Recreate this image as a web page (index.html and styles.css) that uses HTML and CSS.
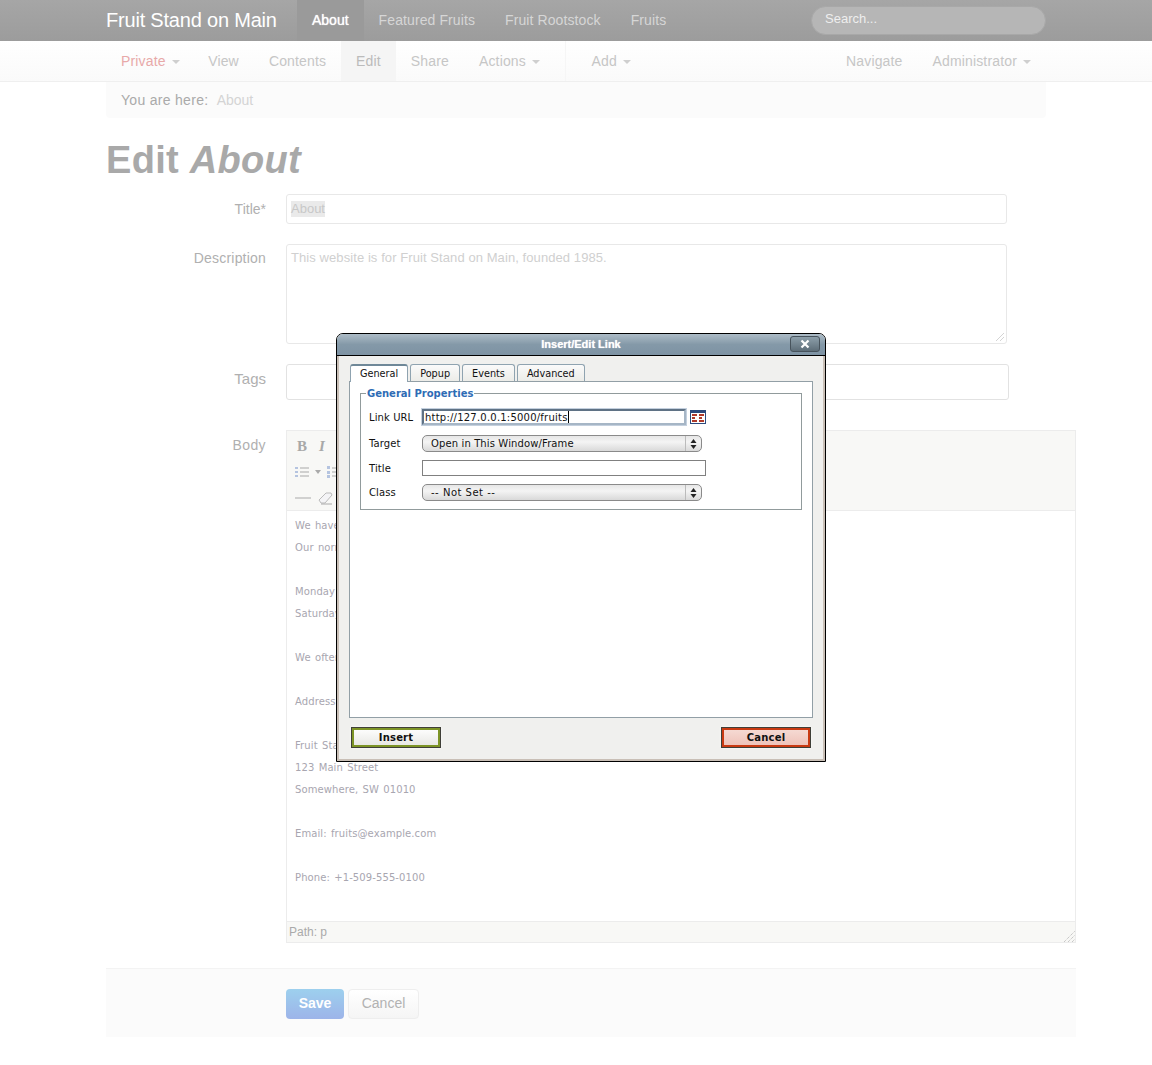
FILE: index.html
```html
<!DOCTYPE html>
<html>

<head>
  <meta charset="utf-8" />
  <title>Edit About</title>
  <link rel="stylesheet" href="styles.css">
</head>

<body>
  <div class="navbar">
    <div class="container nav_row">
      <a class="brand">Fruit Stand on Main</a>
      <a class="nav_item nav_active">About</a>
      <a class="nav_item">Featured Fruits</a>
      <a class="nav_item">Fruit Rootstock</a>
      <a class="nav_item">Fruits</a>
      <div class="search">Search...</div>
    </div>
  </div>

  <div class="subnav">
    <div class="container nav_row">
      <a class="sub_item sub_private">Private <i class="caret"></i></a>
      <a class="sub_item">View</a>
      <a class="sub_item">Contents</a>
      <a class="sub_item sub_active">Edit</a>
      <a class="sub_item">Share</a>
      <a class="sub_item">Actions <i class="caret"></i></a>
      <span class="sub_divider"></span>
      <a class="sub_item">Add <i class="caret"></i></a>
      <a class="sub_item sub_push">Navigate</a>
      <a class="sub_item sub_admin">Administrator <i class="caret"></i></a>
    </div>
  </div>

  <div class="container">
    <div class="breadcrumb">You are here: <a>About</a></div>
    <h1>Edit <em>About</em></h1>
  </div>

  <form class="edit_form">
    <div class="form_row">
      <label class="row_label label_mid">Title*</label>
      <div class="field field_title"><span class="selected">About</span></div>
    </div>
    <div class="form_row">
      <label class="row_label label_desc">Description</label>
      <div class="field field_desc">This website is for Fruit Stand on Main, founded 1985.
        <svg class="grip" width="10" height="10" viewBox="0 0 10 10">
          <path d="M1 9 9 1M5 9 9 5" stroke="#d4d4d4" fill="none" />
        </svg>
      </div>
    </div>
    <div class="form_row row_tags">
      <label class="row_label label_tags">Tags</label>
      <div class="field field_tags"></div>
    </div>
    <div class="form_row">
      <label class="row_label label_body">Body</label>
      <div class="editor">
        <div class="toolbar">
          <div class="tool_row">
            <span class="tool_b">B</span>
            <span class="tool_i">I</span>
          </div>
          <div class="tool_row">
            <svg width="14" height="14" viewBox="0 0 14 14">
              <path d="M0 2h3v2H0zM0 6h3v2H0zM0 10h3v2H0z" fill="#b5c4e0" />
              <path d="M5 3h9M5 7h9M5 11h9" stroke="#a8a8a8" fill="none" />
            </svg>
            <i class="caret caret_tool"></i>
            <svg class="tool_num" width="12" height="14" viewBox="0 0 12 14">
              <path d="M0 1h3v3H0zM0 6h3v3H0zM0 10h3v3H0z" fill="#b5c4e0" />
              <path d="M5 3h7M5 7h7M5 11h7" stroke="#a8a8a8" fill="none" />
            </svg>
          </div>
          <div class="tool_row">
            <svg width="16" height="4" viewBox="0 0 16 4">
              <path d="M0 2h16" stroke="#aaa" fill="none" />
            </svg>
            <svg class="tool_erase" width="15" height="13" viewBox="0 0 15 13">
              <path d="M1 8 8 1h5l1 2-7 8H3z" fill="#f4f4f6" stroke="#bbb" />
              <path d="M3 12h11" stroke="#aaa" fill="none" />
            </svg>
          </div>
        </div>
        <div class="editor_text">
          <p>We have fresh fruit</p>
          <p>Our normal hours are</p>
          <p>&nbsp;</p>
          <p>Monday to Friday</p>
          <p>Saturday and Sunday</p>
          <p>&nbsp;</p>
          <p>We often have more</p>
          <p>&nbsp;</p>
          <p>Address:</p>
          <p>&nbsp;</p>
          <p>Fruit Stand on Main</p>
          <p>123 Main Street</p>
          <p>Somewhere, SW 01010</p>
          <p>&nbsp;</p>
          <p>Email: fruits@example.com</p>
          <p>&nbsp;</p>
          <p>Phone: +1-509-555-0100</p>
        </div>
        <div class="statusbar">Path: p
          <svg class="grip_editor" width="11" height="11" viewBox="0 0 11 11">
            <path d="M0 11 11 0M4 11l7-7M8 11l3-3" stroke="#b4b4b4" stroke-dasharray="1 1" fill="none" />
          </svg>
        </div>
      </div>
    </div>
    <div class="form_actions">
      <span class="btn btn_save">Save</span>
      <span class="btn btn_cancel">Cancel</span>
    </div>
  </form>

  <div class="dialog">
    <div class="dialog_title">
      <span class="dialog_name">Insert/Edit Link</span>
      <span class="dialog_close">
        <svg width="10" height="10" viewBox="0 0 10 10">
          <path d="M1.500 1.500 8.500 8.500M8.500 1.500 1.500 8.500" stroke="#fff" stroke-width="2.200" fill="none" />
        </svg>
      </span>
    </div>
    <div class="dialog_body">
      <div class="tabs">
        <span class="tab tab_active">General</span>
        <span class="tab">Popup</span>
        <span class="tab">Events</span>
        <span class="tab">Advanced</span>
      </div>
      <div class="panel">
        <fieldset class="props">
          <legend>General Properties</legend>
          <div class="prop_row row_url">
            <label>Link URL</label>
            <div class="url_field">http://127.0.0.1:5000/fruits<span class="text_cursor"></span></div>
            <svg class="browse" width="16" height="14" viewBox="0 0 16 14">
              <rect x="0.500" y="0.500" width="15" height="13" fill="#fff" stroke="#2b4a7d" />
              <path d="M1 1h14v2H1z" fill="#2b4a7d" />
              <path d="M2 4h5v2H2zM9 4h5v2H9zM2 7h3v2H2zM9 7h3v2H9zM2 10h5v2H2zM9 10h5v2H9z" fill="#b03a2a" />
            </svg>
          </div>
          <div class="prop_row row_target">
            <label>Target</label>
            <div class="select_box">Open in This Window/Frame
              <span class="select_arrow">
                <svg width="7" height="10" viewBox="0 0 7 10">
                  <path d="M3.500 0 6.500 4H.5zM3.500 10 .5 6h6z" fill="#222" />
                </svg>
              </span>
            </div>
          </div>
          <div class="prop_row row_title">
            <label>Title</label>
            <div class="text_box"></div>
          </div>
          <div class="prop_row row_class">
            <label>Class</label>
            <div class="select_box select_notset">-- Not Set --
              <span class="select_arrow">
                <svg width="7" height="10" viewBox="0 0 7 10">
                  <path d="M3.500 0 6.500 4H.5zM3.500 10 .5 6h6z" fill="#222" />
                </svg>
              </span>
            </div>
          </div>
        </fieldset>
      </div>
      <div class="dialog_buttons">
        <span class="dlg_btn dlg_insert">Insert</span>
        <span class="dlg_btn dlg_cancel">Cancel</span>
      </div>
    </div>
  </div>
</body>

</html>
```

FILE: styles.css
```css
* {
  box-sizing: border-box;
}

body {
  margin: 0;
  background: #fff;
  font-family: "Liberation Sans", Arial, sans-serif;
  font-size: 14px;
  color: #aaa;
}

.container {
  width: 940px;
  margin-left: 106px;
}

.nav_row {
  display: flex;
  align-items: stretch;
  height: 100%;
}

.navbar {
  height: 41px;
  background: linear-gradient(#a6a6a6, #9c9c9c);
}

.brand {
  width: 191px;
  font-size: 20px;
  line-height: 40px;
  color: #fff;
  letter-spacing: -0.2px;
  white-space: nowrap;
}

.nav_item {
  padding: 0 15px;
  line-height: 40px;
  color: #d6d6d6;
  letter-spacing: 0.1px;
}

.nav_active {
  background: #9a9a9a;
  color: #fff;
  text-shadow: 0 0 1px #fff;
  letter-spacing: 0;
}

.search {
  width: 235px;
  height: 29px;
  margin: 6px 0 0 auto;
  padding-left: 13px;
  border-radius: 15px;
  border: 1px solid #a8a8a8;
  background: #b6b6b6;
  font-size: 13px;
  line-height: 23px;
  color: #eee;
}

.subnav {
  height: 41px;
  background: linear-gradient(#fff, #fafafa);
  border-bottom: 1px solid #efefef;
}

.sub_item {
  padding: 0 15px;
  line-height: 40px;
  color: #c6c6c6;
  white-space: nowrap;
  letter-spacing: 0.15px;
}

.sub_private {
  color: #e8a9a9;
}

.sub_active {
  background: #f5f5f5;
  color: #bbb;
}

.sub_divider {
  width: 1px;
  margin: 0 10px 0 12px;
  background: #f6f6f6;
}

.sub_push {
  margin-left: auto;
}

.sub_admin {
  margin-right: 1.5px;
}

.caret {
  display: inline-block;
  width: 0;
  height: 0;
  margin-left: 2px;
  margin-right: -1.5px;
  vertical-align: 2px;
  border-left: 4px solid transparent;
  border-right: 4px solid transparent;
  border-top: 4px solid #cfcfcf;
}

.breadcrumb {
  height: 36px;
  padding-left: 15px;
  background: #fbfbfb;
  border-radius: 0 0 4px 4px;
  line-height: 37px;
  color: #aaa;
  letter-spacing: 0.3px;
}

.breadcrumb a {
  margin-left: 4px;
  color: #d4d4d4;
  letter-spacing: 0;
}

h1 {
  margin: 22px 0 14px;
  font-size: 38px;
  line-height: 40px;
  color: #a9a9a9;
  letter-spacing: 0.3px;
}

.edit_form {
  width: 970px;
  margin-left: 106px;
}

.form_row {
  display: grid;
  grid-template-columns: 160px 1fr;
  column-gap: 20px;
  align-items: start;
  margin-bottom: 20px;
}

.row_tags {
  margin-bottom: 30px;
}

.row_label {
  text-align: right;
  color: #b0b0b0;
}

.label_mid {
  align-self: center;
}

.label_desc {
  padding-top: 6px;
  letter-spacing: 0.2px;
}

.label_tags {
  padding-top: 6px;
  font-size: 15px;
}

.label_body {
  padding-top: 7px;
  letter-spacing: 0.4px;
}

.field {
  position: relative;
  border: 1px solid #e8e8e8;
  border-radius: 3px;
  background: #fff;
  padding: 0 4px;
  font-size: 13px;
  color: #d0d0d0;
}

.field_title {
  width: 721px;
  height: 30px;
  line-height: 27px;
}

.selected {
  background: #eaeaea;
  color: #c8c8c8;
  display: inline-block;
  line-height: 16px;
  height: 16px;
}

.field_desc {
  width: 721px;
  height: 100px;
  padding-top: 4px;
  line-height: 18px;
  letter-spacing: 0.08px;
}

.field_tags {
  width: 723px;
  height: 36px;
  border-color: #e2e2e2;
}

.grip {
  position: absolute;
  right: 1px;
  bottom: 1px;
}

.editor {
  width: 790px;
  height: 513px;
  margin-top: 0;
  border: 1px solid #ececec;
  display: flex;
  flex-direction: column;
}

.toolbar {
  height: 80px;
  padding-top: 2px;
  background: #f8f8f6;
  border-bottom: 1px solid #ececec;
}

.tool_row {
  height: 26px;
  padding-left: 8px;
  display: flex;
  align-items: center;
}

.tool_b {
  width: 22px;
  margin-left: 2px;
  font-family: "Liberation Serif", serif;
  font-weight: bold;
  font-size: 15px;
  color: #a8a8a8;
}

.tool_i {
  font-family: "Liberation Serif", serif;
  font-weight: bold;
  font-style: italic;
  font-size: 15px;
  color: #a8a8a8;
}

.caret_tool {
  margin-left: 6px;
  margin-right: 0;
  border-top-color: #aaa;
  border-left-width: 3px;
  border-right-width: 3px;
}

.tool_num {
  margin-left: 6px;
}

.tool_erase {
  margin-left: 7px;
}

.editor_text {
  flex: 1;
  padding-top: 4px;
  background: #fff;
  font-family: "DejaVu Sans", Verdana, sans-serif;
  font-size: 10px;
  letter-spacing: 0.1px;
  word-spacing: 1px;
  color: #a8a6b0;
}

.editor_text p {
  margin: 0;
  height: 22px;
  padding-left: 8px;
  line-height: 22px;
  white-space: nowrap;
}

.statusbar {
  position: relative;
  height: 21px;
  padding-left: 2px;
  background: #f8f8f6;
  border-top: 1px solid #ececec;
  font-size: 12px;
  line-height: 20px;
  color: #aaa;
}

.grip_editor {
  position: absolute;
  right: 0;
  bottom: 0;
}

.form_actions {
  display: flex;
  gap: 4px;
  height: 69px;
  margin-top: 25px;
  padding: 20px 0 0 180px;
  background: #fbfbfb;
  border-top: 1px solid #f3f3f3;
}

.btn {
  height: 30px;
  border-radius: 4px;
  line-height: 29px;
  text-align: center;
}

.btn_save {
  width: 58px;
  background: linear-gradient(#9dd0ee, #9db4e9);
  color: #fff;
  font-weight: bold;
}

.btn_cancel {
  width: 71px;
  border: 1px solid #eee;
  background: linear-gradient(#fff, #f5f5f5);
  color: #b2b2b2;
  line-height: 27px;
}

.dialog {
  position: absolute;
  left: 336px;
  top: 333px;
  width: 490px;
  height: 429px;
  display: flex;
  flex-direction: column;
  border: 1px solid #000;
  border-radius: 7px 7px 0 0;
  background: #f0f0ee;
  font-family: "DejaVu Sans", Verdana, sans-serif;
  font-size: 10px;
  color: #111;
}

.dialog_title {
  position: relative;
  height: 22px;
  flex: none;
  background: linear-gradient(#adbcc7, #8499a8 50%, #7e93a4);
  border-bottom: 1px solid #000;
  border-radius: 6px 6px 0 0;
  text-align: center;
}

.dialog_name {
  display: block;
  color: #fff;
  font-family: "Liberation Sans", Arial, sans-serif;
  font-weight: bold;
  font-size: 11px;
  line-height: 20px;
  text-shadow: 0 0 1px #eee;
}

.dialog_close {
  position: absolute;
  right: 5px;
  top: 2px;
  width: 30px;
  height: 16px;
  display: flex;
  align-items: center;
  justify-content: center;
  border: 1px solid #47535c;
  border-radius: 3px;
  background: linear-gradient(#8d9faa, #5d6d78);
}

.dialog_body {
  flex: 1;
  display: flex;
  flex-direction: column;
  border-left: 2px solid #c9bfb6;
  border-right: 2px solid #c9bfb6;
  border-bottom: 2px solid #c9bfb6;
  padding: 8px 10px 0;
}

.tabs {
  display: flex;
  gap: 2px;
  height: 17px;
  padding-left: 1px;
  flex: none;
}

.tab {
  height: 17px;
  padding: 0 9px;
  border: 1px solid #8fa3b0;
  border-bottom: 0;
  border-radius: 3px 3px 0 0;
  background: linear-gradient(#fafafa, #ecece8);
  font-size: 9.7px;
  line-height: 17px;
}

.tab_active {
  position: relative;
  height: 18px;
  padding: 0 9px;
  background: #fff;
  border-top: 2px solid #6f8898;
  line-height: 15px;
  z-index: 1;
}

.panel {
  height: 337px;
  flex: none;
  padding: 4px 10px 0;
  background: #fff;
  border: 1px solid #929fa6;
}

.props {
  height: 125px;
  margin: -1px 0 0;
  padding: 8px 0 0 8px;
  border: 1px solid #919b9c;
  min-width: 0;
}

.props legend {
  margin-left: -3px;
  padding: 2px 1px 0;
  font-weight: bold;
  font-size: 10px;
  color: #2e6cb5;
  line-height: 14px;
}

.prop_row {
  display: flex;
  align-items: center;
}

.prop_row label {
  width: 53px;
  flex: none;
  letter-spacing: 0.1px;
}

.row_target {
  margin-top: 10px;
}

.row_title {
  margin-top: 8px;
}

.row_class {
  margin-top: 8px;
}

.url_field {
  width: 264px;
  height: 16px;
  padding-left: 1px;
  border: 2px solid #6a7c8e;
  border-color: #5f7285 #a6b6c6 #a6b6c6 #5f7285;
  outline: 1px solid #c4d0de;
  background: #fff;
  line-height: 12px;
  letter-spacing: 0.22px;
  white-space: nowrap;
}

.text_cursor {
  display: inline-block;
  width: 1px;
  height: 12px;
  vertical-align: -2px;
  background: #000;
}

.browse {
  margin-left: 4px;
}

.select_box {
  position: relative;
  width: 280px;
  height: 17px;
  padding-left: 8px;
  border: 1px solid #8a8a8a;
  border-radius: 5px;
  background: linear-gradient(#e6e6e6, #f4f4f4 40%, #d9d9d9);
  line-height: 15px;
  letter-spacing: 0.12px;
}

.select_notset {
  letter-spacing: 0.5px;
}

.select_arrow {
  position: absolute;
  right: 0;
  top: 0;
  bottom: 0;
  width: 16px;
  display: flex;
  align-items: center;
  justify-content: center;
  border-left: 1px solid #bbb;
}

.text_box {
  width: 284px;
  height: 16px;
  border: 1px solid #808080;
  background: #fff;
}

.dialog_buttons {
  display: flex;
  justify-content: space-between;
  padding: 9px 2px 0 2px;
}

.dlg_btn {
  width: 90px;
  height: 21px;
  border: 1px solid #3f3f38;
  box-shadow: inset 0 0 0 2px #7d9426, 0 0 2px #fff;
  background: linear-gradient(#fff, #e6e6e2);
  font-weight: bold;
  font-size: 10px;
  line-height: 20px;
  text-align: center;
  letter-spacing: 0.2px;
}

.dlg_cancel {
  box-shadow: inset 0 0 0 2px #c93a12, 0 0 2px #fff;
  background: linear-gradient(#f6dcd6, #eec0b6);
}
```
